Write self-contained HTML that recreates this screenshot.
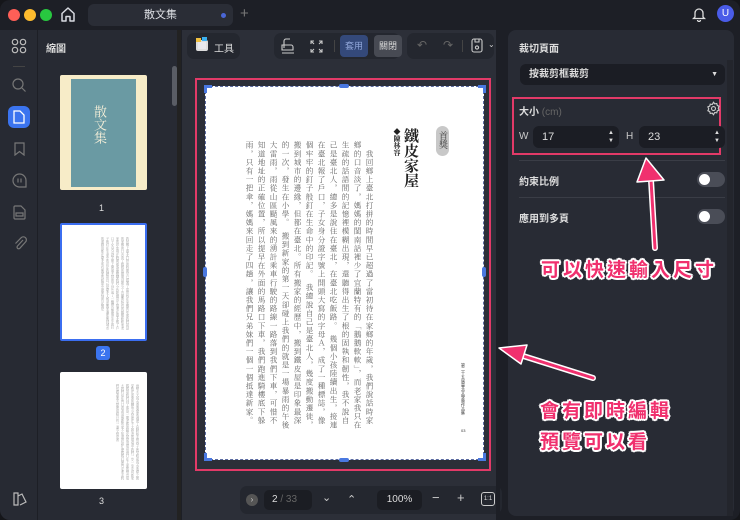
<!DOCTYPE html>
<html><head><meta charset="utf-8"><style>
*{box-sizing:border-box;margin:0;padding:0}
body{width:740px;height:520px;overflow:hidden;background:#15161a;font-family:"Liberation Sans","Noto Sans CJK TC",sans-serif;color:#e6e8ee;position:relative}
.abs{position:absolute}
.win{left:0;top:0;width:740px;height:520px;background:#1d1f26;border-radius:10px;overflow:hidden}
.dot{width:12px;height:12px;border-radius:50%;top:9px}
.panel{background:#272a33}
.vtext{writing-mode:vertical-rl;font-family:"Noto Serif CJK SC","Liberation Serif",serif;color:#666;font-size:7.6px;line-height:12px;letter-spacing:1px}
.ann{font-weight:bold;font-size:19px;color:#f0306e;text-shadow:-2px 0 #fff,2px 0 #fff,0 -2px #fff,0 2px #fff,-1.5px -1.5px #fff,1.5px 1.5px #fff,-1.5px 1.5px #fff,1.5px -1.5px #fff;letter-spacing:3px;white-space:nowrap}
.toggle{width:28px;height:15px;border-radius:8px;background:#4a4d57}
.toggle:after{content:"";position:absolute;left:2px;top:2px;width:11px;height:11px;border-radius:50%;background:#fff}
.inp{background:#1b1d24;border-radius:6px;height:22px;font-size:11px;line-height:22px;padding-left:9px;color:#ddd}
</style></head><body>
<div class="abs win">
<div class="abs dot" style="left:8px;background:#fe5f57"></div>
<div class="abs dot" style="left:24px;background:#febc2e"></div>
<div class="abs dot" style="left:40px;background:#28c840"></div>
<svg class="abs" style="left:60px;top:6px" width="16" height="17" viewBox="0 0 16 17"><path d="M2 7.5L8 2l6 5.5V15H10v-4.5H6V15H2z" fill="none" stroke="#d8dae0" stroke-width="1.5" stroke-linejoin="round"/></svg>
<div class="abs" style="left:88px;top:4px;width:145px;height:22px;background:#2a2d36;border-radius:6px;font-size:11px;text-align:center;line-height:22px;color:#dfe1e6">散文集</div>
<div class="abs" style="left:221px;top:13px;width:5px;height:5px;border-radius:50%;background:#4a66d6"></div>
<div class="abs" style="left:240px;top:5px;font-size:15px;color:#777">+</div>
<svg class="abs" style="left:692px;top:6px" width="14" height="16" viewBox="0 0 14 16"><path d="M3 11V7a4 4 0 018 0v4l1.5 1.5h-11zM5.5 14a1.5 1.5 0 003 0" fill="none" stroke="#ddd" stroke-width="1.3"/></svg>
<div class="abs" style="left:717px;top:5px;width:17px;height:17px;border-radius:50%;background:#4a5ce8;font-size:10px;text-align:center;line-height:17px;color:#fff">U</div>

<div class="abs panel" style="left:0;top:30px;width:38px;height:490px;border-right:1px solid #1d1f26"></div>
<svg class="abs" style="left:11px;top:38px" width="16" height="16" viewBox="0 0 16 16" fill="none" stroke="#bbb" stroke-width="1.2"><circle cx="4" cy="4" r="2.7"/><circle cx="12" cy="4" r="2.7"/><circle cx="4" cy="12" r="2.7"/><circle cx="12" cy="12" r="2.7"/></svg>
<div class="abs" style="left:13px;top:66px;width:12px;height:1px;background:#444"></div>
<svg class="abs" style="left:11px;top:77px" width="16" height="16" viewBox="0 0 16 16" fill="none" stroke="#777" stroke-width="1.2"><circle cx="7" cy="7" r="5"/><path d="M11 11l3.5 3.5"/></svg>
<div class="abs" style="left:8px;top:106px;width:22px;height:22px;border-radius:6px;background:#3b74ef"></div>
<svg class="abs" style="left:13px;top:110px" width="12" height="14" viewBox="0 0 12 14" fill="none" stroke="#fff" stroke-width="1.3"><path d="M1 1h6l4 4v8H1z"/></svg>
<svg class="abs" style="left:14px;top:142px" width="11" height="14" viewBox="0 0 11 14" fill="none" stroke="#777" stroke-width="1.2"><path d="M1 1h9v12L5.5 9.5 1 13z"/></svg>
<svg class="abs" style="left:12px;top:173px" width="15" height="15" viewBox="0 0 15 15" fill="none" stroke="#777" stroke-width="1.2"><path d="M7.5 1a6.5 6.5 0 1 0 0 13h6.5v-6.5A6.5 6.5 0 0 0 7.5 1zM6 5.5v4M9 5.5v4"/></svg>
<svg class="abs" style="left:13px;top:205px" width="13" height="15" viewBox="0 0 13 15" fill="none" stroke="#777" stroke-width="1.2"><path d="M1 2a1 1 0 0 1 1-1h6l4 4v8a1 1 0 0 1-1 1H2a1 1 0 0 1-1-1zM3 8h7v3H3z"/></svg>
<svg class="abs" style="left:13px;top:235px" width="14" height="16" viewBox="0 0 14 16" fill="none" stroke="#777" stroke-width="1.2"><path d="M10 5L4.5 11a1.6 1.6 0 0 0 2.3 2.3L12.5 7a3 3 0 0 0-4.3-4.3L2.5 8.5"/></svg>
<svg class="abs" style="left:13px;top:492px" width="14" height="14" viewBox="0 0 14 14" fill="none" stroke="#bbb" stroke-width="1.2"><path d="M1 1h4v12H1zM5 4l4-2 4 8-6 3"/></svg>

<div class="abs panel" style="left:38px;top:30px;width:142px;height:490px"></div>
<div class="abs" style="left:46px;top:40px;font-size:10px;font-weight:bold;color:#ddd">縮圖</div>
<div class="abs" style="left:172px;top:66px;width:5px;height:40px;border-radius:3px;background:#5a5d65"></div>
<div class="abs" style="left:177px;top:30px;width:4px;height:490px;background:#222"></div>
<div class="abs" style="left:60px;top:75px;width:87px;height:115px;background:#f7ecc8;border-radius:2px"></div>
<div class="abs" style="left:71px;top:79px;width:65px;height:108px;background:#6a9aa3"></div>
<div class="abs" style="left:93px;top:105px;font-family:'Noto Serif CJK SC',serif;font-size:13px;color:#f4eed8;writing-mode:vertical-rl;line-height:14px">散文集</div>
<div class="abs" style="left:99px;top:203px;font-size:9px;color:#ddd">1</div>
<div class="abs" style="left:60px;top:223px;width:87px;height:118px;background:#fff;border:2px solid #3b6ef0;border-radius:2px"></div>
<div class="abs vtext" style="left:70px;top:237px;height:95px;width:60px;font-size:3.2px;line-height:5px;letter-spacing:0;color:#999;overflow:hidden">我回鄉上臺北打拼的時間早已超過了當初待在家鄉的年歲我們說話的家鄉的口音淡了媽媽的閩南話裡少了宜蘭的特有的鵝鵝軟軟而老家的印象則在時間裡逐漸模糊我們小孩陸續出生接連在臺北報了戶口子女身分證字號上開頭大寫的字母A成了一種標誌像個牢牢的釘子般釘在生命中的印記我總說自己是臺北人幾度搬家遷徙搬到城市的邊緣但都在臺北所有搬家的經歷中最深刻的記憶是</div>
<div class="abs" style="left:96px;top:346px;width:14px;height:14px;background:#3b74ef;border-radius:3px;font-size:9px;text-align:center;line-height:14px;color:#fff">2</div>
<div class="abs" style="left:60px;top:372px;width:87px;height:117px;background:#fff;border-radius:2px"></div>
<div class="abs vtext" style="left:68px;top:384px;height:96px;width:72px;font-size:3.2px;line-height:5px;letter-spacing:0;color:#999;overflow:hidden">雨勢太大雨水滑過傘面淋溼了肩膀和手臂巷子狹窄眼前雨水迷濛之間穿梭在更深的轉角小巷裡在不太熟悉的環境中我們一步一步走向新家媽媽說我們到了那是一間老舊的鐵皮屋屋頂很低雨打在上面的聲音很大我們站在門口看著這個新的家不知道該說什麼媽媽打開門走進去我們也跟著進去屋裡很暗只有一盞小燈亮著</div>
<div class="abs" style="left:99px;top:496px;font-size:9px;color:#ddd">3</div>

<div class="abs" style="left:182px;top:30px;width:314px;height:490px;background:#2c2f38"></div>
<div class="abs" style="left:187px;top:33px;width:53px;height:26px;background:#24272f;border-radius:7px"></div>
<div class="abs" style="left:196px;top:40px;width:12px;height:11px;background:#e8e8ec;border-radius:2px;border:2px solid #ddd"></div>
<div class="abs" style="left:196px;top:38px;width:5px;height:4px;background:#f0c040"></div>
<div class="abs" style="left:202px;top:37px;width:5px;height:4px;background:#3bb0ef"></div>
<div class="abs" style="left:214px;top:40px;font-size:10px;color:#ddd">工具</div>
<div class="abs" style="left:274px;top:33px;width:126px;height:26px;background:#24272f;border-radius:7px"></div>
<svg class="abs" style="left:281px;top:38px" width="14" height="16" viewBox="0 0 14 16" fill="none" stroke="#ccc" stroke-width="1.1"><path d="M3 10V3a2 2 0 0 1 2-2h4M1 7h9a2 2 0 0 1 2 2v3H1zM1 15h12"/></svg>
<svg class="abs" style="left:310px;top:40px" width="13" height="13" viewBox="0 0 13 13" fill="none" stroke="#ccc" stroke-width="1.1"><path d="M1 4V1h3M9 1h3v3M12 9v3H9M4 12H1V9M1 1l3 3M12 1L9 4M12 12L9 9M1 12l3-3"/></svg>
<div class="abs" style="left:334px;top:40px;width:1px;height:12px;background:#444"></div>
<div class="abs" style="left:340px;top:35px;width:28px;height:22px;background:#34497a;border-radius:4px;font-size:9px;color:#8fa5d8;text-align:center;line-height:22px">套用</div>
<div class="abs" style="left:374px;top:35px;width:28px;height:22px;background:#474a53;border-radius:4px;font-size:9px;color:#ddd;text-align:center;line-height:22px">關閉</div>
<div class="abs" style="left:407px;top:33px;width:87px;height:26px;background:#24272f;border-radius:7px"></div>
<div class="abs" style="left:417px;top:38px;font-size:12px;color:#666">↶</div>
<div class="abs" style="left:443px;top:38px;font-size:12px;color:#666">↷</div>
<div class="abs" style="left:462px;top:40px;width:1px;height:12px;background:#444"></div>
<svg class="abs" style="left:471px;top:38px" width="12" height="15" viewBox="0 0 12 15" fill="none" stroke="#ccc" stroke-width="1.1"><rect x="1" y="1" width="10" height="13" rx="2"/><path d="M4 1v3h4V1"/><circle cx="6" cy="9.5" r="1.6"/></svg>
<div class="abs" style="left:488px;top:40px;font-size:8px;color:#ccc">⌄</div>

<div class="abs" style="left:195px;top:78px;width:296px;height:393px;border:2px solid #e23a68"></div>
<div class="abs" style="left:205px;top:86px;width:279px;height:374px;background:#fff;border:1px dashed #5a6aa0"></div>
<div class="abs" style="left:204px;top:85px;width:8px;height:8px;border-left:3px solid #4a78e0;border-top:3px solid #4a78e0"></div>
<div class="abs" style="left:478px;top:85px;width:8px;height:8px;border-right:3px solid #4a78e0;border-top:3px solid #4a78e0"></div>
<div class="abs" style="left:204px;top:453px;width:8px;height:8px;border-left:3px solid #4a78e0;border-bottom:3px solid #4a78e0"></div>
<div class="abs" style="left:478px;top:453px;width:8px;height:8px;border-right:3px solid #4a78e0;border-bottom:3px solid #4a78e0"></div>
<div class="abs" style="left:339px;top:84px;width:10px;height:4px;background:#4a78e0;border-radius:2px"></div>
<div class="abs" style="left:339px;top:458px;width:10px;height:4px;background:#4a78e0;border-radius:2px"></div>
<div class="abs" style="left:203px;top:267px;width:4px;height:10px;background:#4a78e0;border-radius:2px"></div>
<div class="abs" style="left:482px;top:267px;width:4px;height:10px;background:#4a78e0;border-radius:2px"></div>
<div class="abs" style="left:436px;top:126px;width:13px;height:30px;background:#c8c8c8;border-radius:7px"></div>
<div class="abs" style="left:437px;top:131px;writing-mode:vertical-rl;font-family:'Noto Serif CJK SC',serif;font-size:9px;color:#333">首獎</div>
<div class="abs" style="left:403px;top:128px;writing-mode:vertical-rl;font-family:'Noto Serif CJK SC',serif;font-size:15px;font-weight:bold;color:#222;line-height:16px">鐵皮家屋</div>
<div class="abs" style="left:393px;top:128px;writing-mode:vertical-rl;font-family:'Noto Serif CJK SC',serif;font-size:7px;font-weight:bold;color:#222;line-height:8px">◆陳林容</div>
<div class="abs vtext" style="left:242px;top:141px;width:133px;height:290px;overflow:hidden">　我回鄉上臺北打拼的時間早已超過了當初待在家鄉的年歲，我們說話時家鄉的口音淡了，媽媽的閩南話裡少了宜蘭特有的「鵝鵝軟軟」，而老家我只在生疏的話語間的記憶裡模糊出現，還聽得出生了根的固執和韌性，我不說自己是臺北人，總多是說住在臺北，在臺北吃飯路。　幾個小孩陸續出生，接連在臺北報了戶口，子女身分證字號上開頭大寫的字母Ａ，成了一種標誌，像個牢牢的釘子般釘在生命中的印記。　我總說自己是臺北人，幾度搬動遷徙，搬到城市的邊緣，但都在臺北。所有搬家的經歷中，搬到鐵皮屋是印象最深的一次，發生在小學。　搬到新家的第一天卻碰上我們的就是一場暴雨的午後大雷雨，雨從山區颳風來的湧計乘車行駛的路線一路落到我們下車，可惜不知道地址的正確位置，所以提早在外面的馬路口下車，我們跑進騎樓底下躲雨，只有一把傘，媽媽來回走了四趟，讓我們兄弟妹們一個一個抵達新家。　雨勢太大，雨水滑過傘面淋溼了肩膀和手臂，巷子狹窄，眼前雨水迷濛之間穿梭在更深的轉角小巷裡，在不太</div>
<div class="abs" style="left:461px;top:363px;writing-mode:vertical-rl;font-size:4px;color:#333;line-height:5px">第二十五屆臺北文學獎作品集</div>
<div class="abs" style="left:461px;top:428px;font-size:4px;color:#333">03</div>

<div class="abs" style="left:240px;top:486px;width:262px;height:28px;background:#24272f;border-radius:7px"></div>
<div class="abs" style="left:246px;top:494px;width:12px;height:12px;border-radius:50%;background:#555;font-size:8px;color:#ccc;text-align:center;line-height:12px">›</div>
<div class="abs" style="left:264px;top:490px;width:48px;height:20px;background:#1b1d23;border-radius:5px;font-size:10px;line-height:20px;padding-left:8px;color:#ddd">2 <span style="color:#666">/ 33</span></div>
<div class="abs" style="left:322px;top:491px;font-size:11px;color:#ccc">⌄</div>
<div class="abs" style="left:347px;top:493px;font-size:11px;color:#ccc">⌃</div>
<div class="abs" style="left:377px;top:490px;width:45px;height:20px;background:#1b1d23;border-radius:5px;font-size:10px;line-height:20px;text-align:center;color:#ddd">100%</div>
<div class="abs" style="left:432px;top:490px;font-size:13px;color:#ccc">−</div>
<div class="abs" style="left:457px;top:490px;font-size:13px;color:#ccc">+</div>
<div class="abs" style="left:481px;top:492px;width:14px;height:14px;border:1.3px solid #ccc;border-radius:3px;font-size:6px;text-align:center;line-height:12px;color:#ddd">1:1</div>

<div class="abs" style="left:496px;top:30px;width:4px;height:490px;background:#1d1f26"></div>
<div class="abs" style="left:508px;top:30px;width:226px;height:486px;background:#282b34;border-radius:8px"></div>
<div class="abs" style="left:727px;top:60px;width:6px;height:456px;background:#23252c"></div>
<div class="abs" style="left:519px;top:40px;font-size:10px;font-weight:bold;color:#ddd">裁切頁面</div>
<div class="abs inp" style="left:520px;top:64px;width:205px;height:21px;font-size:10px;line-height:21px;font-weight:bold">按裁剪框裁剪<span style="position:absolute;right:7px;font-size:7px">▼</span></div>
<div class="abs" style="left:512px;top:97px;width:209px;height:58px;border:2px solid #e23a68"></div>
<div class="abs" style="left:519px;top:103px;font-size:10px;font-weight:bold;color:#ddd">大小 <span style="font-weight:normal;color:#666">(cm)</span></div>
<svg class="abs" style="left:706px;top:101px" width="15" height="15" viewBox="0 0 24 24" fill="none" stroke="#ccc" stroke-width="1.8"><circle cx="12" cy="12" r="3.2"/><path d="M12 2l2 2.6 3.2-.6.8 3.1 3 1.4-1.4 3 1.4 3-3 1.4-.8 3.1-3.2-.6L12 22l-2-2.6-3.2.6-.8-3.1-3-1.4 1.4-3-1.4-3 3-1.4.8-3.1 3.2.6z"/></svg>
<div class="abs" style="left:519px;top:131px;font-size:10px;color:#ccc">W</div>
<div class="abs inp" style="left:533px;top:126px;width:86px">17<span style="position:absolute;right:5px;top:0;font-size:6px;line-height:8px;padding-top:3px">▲<br>▼</span></div>
<div class="abs" style="left:626px;top:131px;font-size:10px;color:#ccc">H</div>
<div class="abs inp" style="left:639px;top:126px;width:86px">23<span style="position:absolute;right:5px;top:0;font-size:6px;line-height:8px;padding-top:3px">▲<br>▼</span></div>
<div class="abs" style="left:519px;top:160px;width:206px;height:1px;background:#3a3d46"></div>
<div class="abs" style="left:519px;top:173px;font-size:10px;font-weight:bold;color:#ddd">約束比例</div>
<div class="abs toggle" style="left:697px;top:172px"></div>
<div class="abs" style="left:519px;top:197px;width:206px;height:1px;background:#3a3d46"></div>
<div class="abs" style="left:519px;top:210px;font-size:10px;font-weight:bold;color:#ddd">應用到多頁</div>
<div class="abs toggle" style="left:697px;top:209px"></div>

<svg class="abs" style="left:0;top:0" width="740" height="520" viewBox="0 0 740 520">
<path d="M655 248 L651 180" stroke="#fff" stroke-width="6" stroke-linecap="round"/>
<path d="M655 248 L651 180" stroke="#f0306e" stroke-width="3" stroke-linecap="round"/>
<path d="M646 158 L637 182 L664 180 Z" fill="#f0306e" stroke="#fff" stroke-width="1.5" stroke-linejoin="round"/>
<path d="M593 378 L520 355" stroke="#fff" stroke-width="6" stroke-linecap="round"/>
<path d="M593 378 L520 355" stroke="#f0306e" stroke-width="3" stroke-linecap="round"/>
<path d="M499 348 L521 364 L527 345 Z" fill="#f0306e" stroke="#fff" stroke-width="1.5" stroke-linejoin="round"/>
</svg>
<div class="abs ann" style="left:541px;top:255px">可以快速輸入尺寸</div>
<div class="abs ann" style="left:540px;top:396px">會有即時編輯</div>
<div class="abs ann" style="left:540px;top:427px">預覽可以看</div>
</div>
</body></html>
